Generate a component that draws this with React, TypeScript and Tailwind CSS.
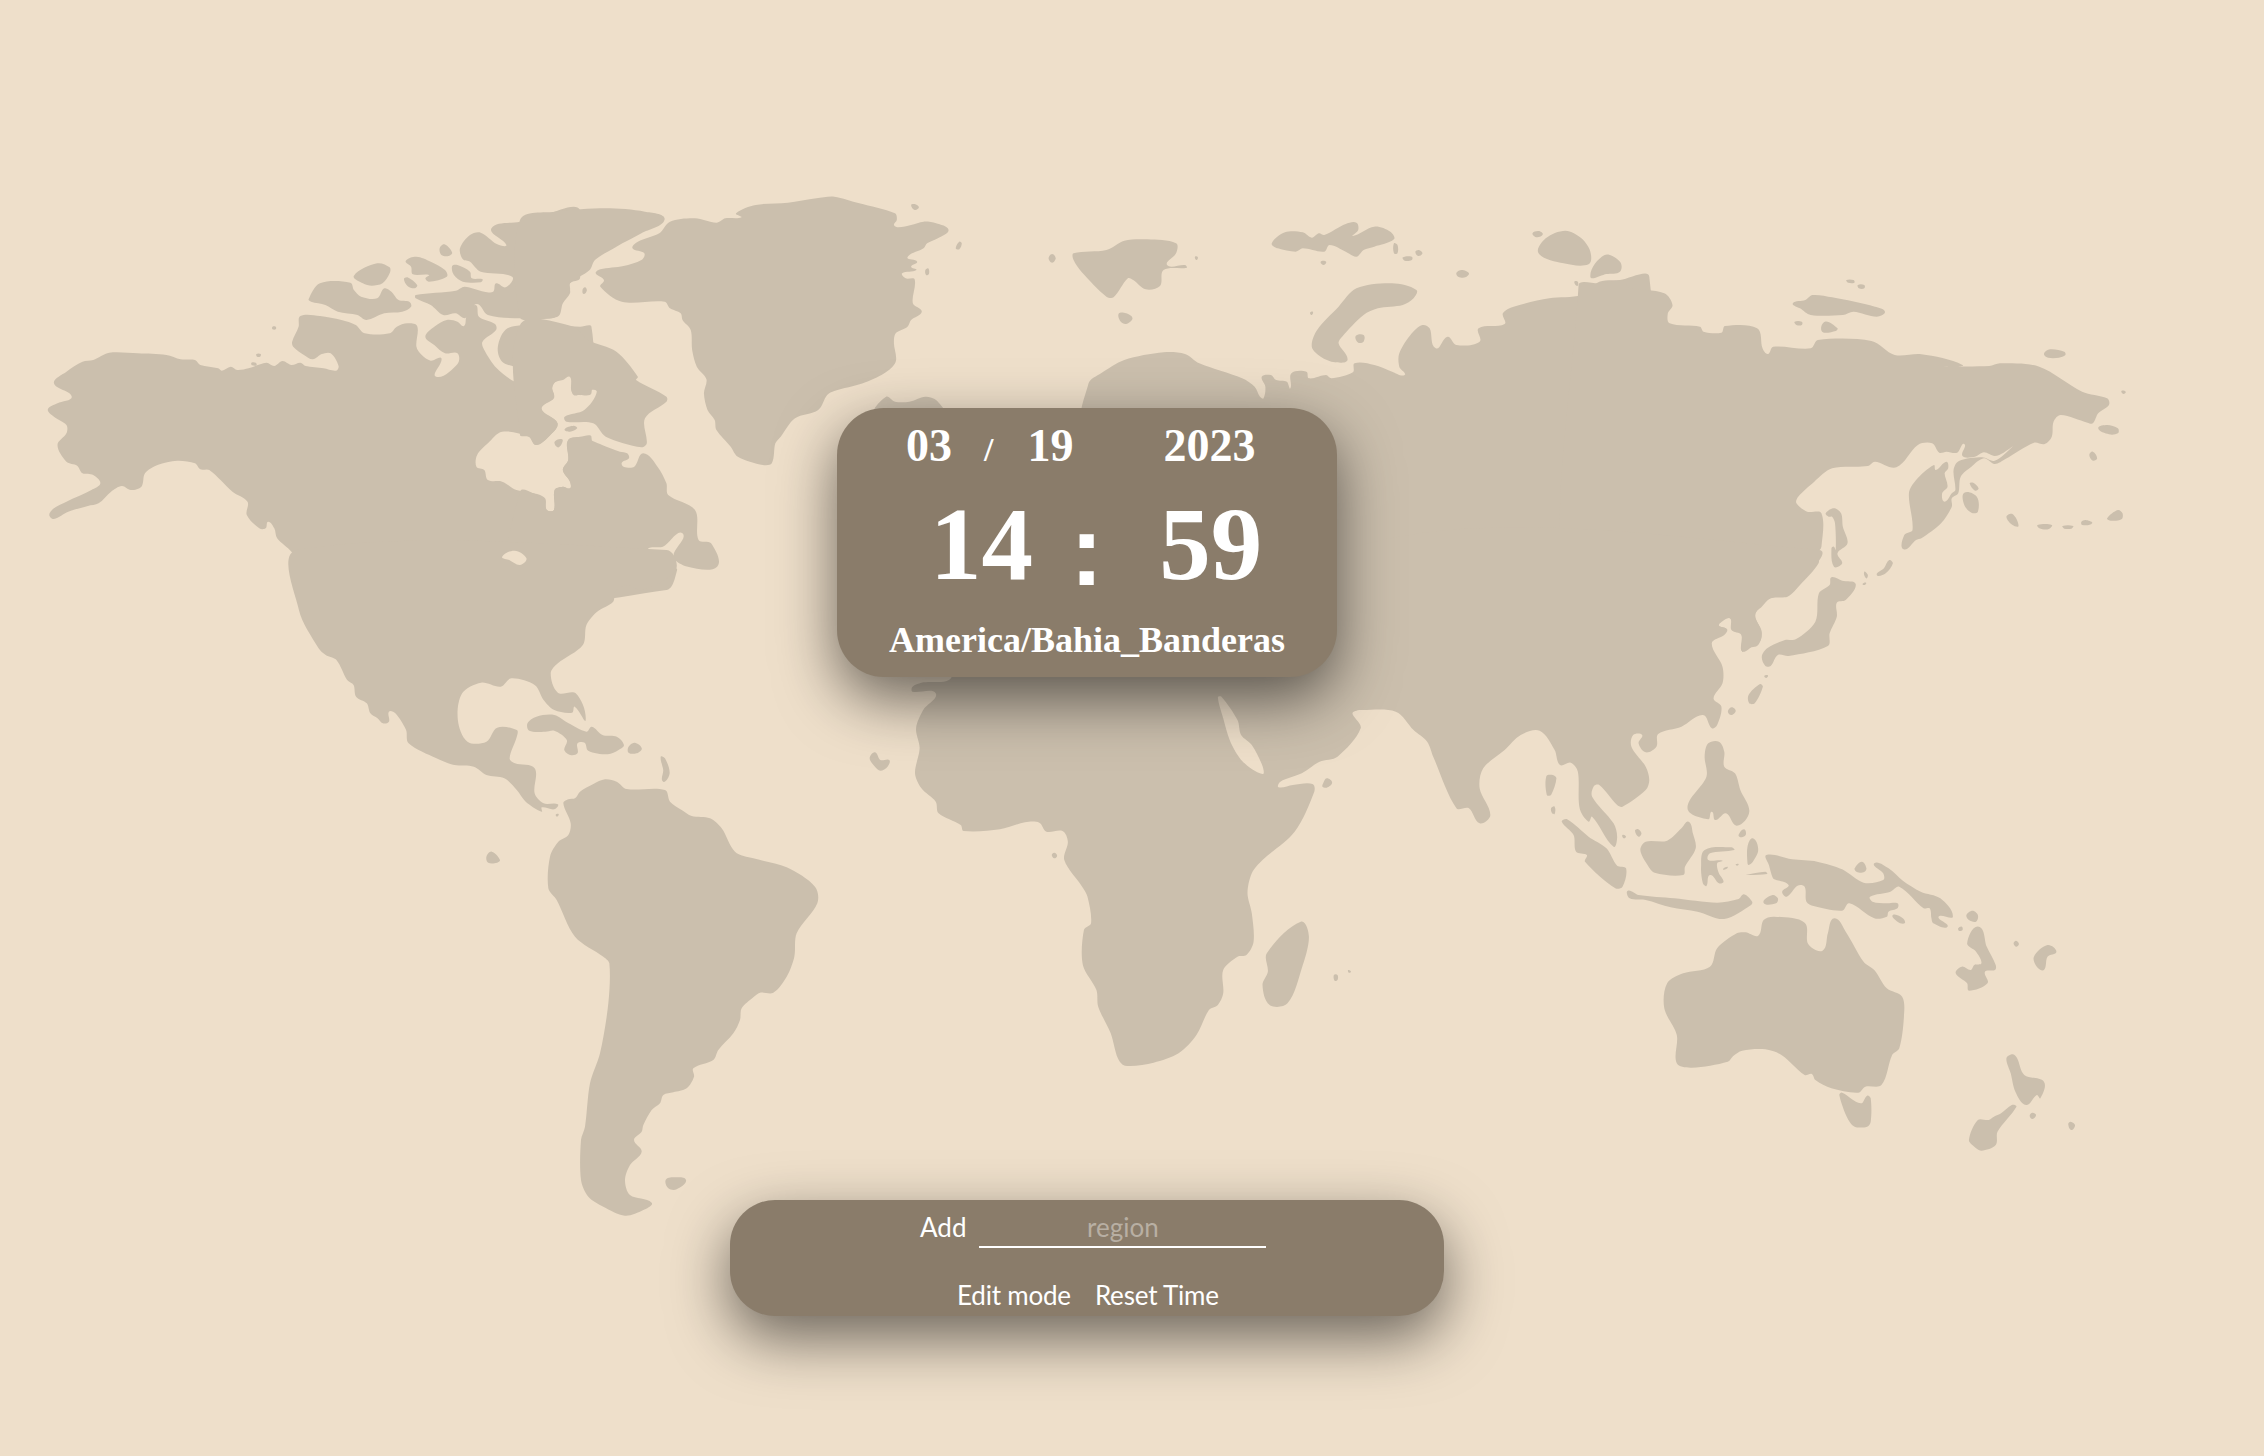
const REGIONS = [
  {
    // Alaska, Canada
    x: 20, y: 180, sx: 1 / 2.8, sy: 1 / 3,
    d: "M95,610 130,575 175,545 205,540 250,518 330,520 410,525 450,538 490,540 505,555 555,565 565,572 590,560 608,570 640,565 690,548 712,558 735,543 760,555 785,548 800,558 850,565 885,572 892,558 870,520 845,522 820,538 795,525 765,500 762,485 780,440 785,408 840,408 900,420 940,435 965,460 1035,460 1055,440 1085,430 1112,438 1110,500 1125,525 1150,542 1180,535 1165,590 1225,552 1225,520 1190,520 1160,495 1135,470 1160,440 1195,420 1225,425 1243,438 1250,410 1275,375 1285,410 1330,432 1333,450 1295,485 1300,510 1335,565 1385,605 1400,600 1402,570 1350,545 1338,500 1365,445 1440,437 1568,440 1600,440 1600,640 1568,645 1545,635 1540,590 1520,600 1495,608 1490,625 1495,650 1460,688 1505,730 1480,770 1445,795 1425,770 1350,755 1310,790 1280,825 1278,860 1300,870 1310,900 1350,905 1390,930 1440,940 1470,955 1475,990 1495,990 1497,930 1520,920 1540,925 1540,905 1520,870 1535,840 1535,780 1568,770 1600,770 1600,1230 780,1230 780,1150 760,1115 720,1075 712,1045 695,1025 688,1045 670,1045 635,1005 637,965 595,935 530,870 505,868 490,850 440,842 385,855 350,880 340,920 310,930 285,918 255,935 220,970 190,978 135,995 95,1017 82,1005 95,985 130,965 200,930 225,910 205,885 175,880 160,857 130,845 105,795 130,760 130,735 95,710 78,688 105,670 145,650 Z M1108,345 1220,332 1245,320 1300,335 1325,335 1333,310 1360,322 1378,290 1290,275 1260,245 1240,238 1232,205 1260,165 1290,158 1335,192 1362,195 1320,145 1400,125 1480,100 1568,90 1568,295 1540,310 1540,340 1520,370 1505,410 1400,415 1310,405 1280,372 1255,400 1245,415 1220,400 1185,405 1150,375 1108,355 Z M1175,205 1188,193 1210,218 1200,228 1180,225 Z M935,287 1000,250 1035,262 1035,280 1015,310 985,317 960,310 Z M1080,243 1110,230 1150,245 1190,270 1195,290 1145,305 1135,295 1145,285 1100,283 1095,260 Z M1210,258 1225,255 1260,275 1265,295 1295,298 1290,307 1240,305 1215,285 Z M1075,297 1085,292 1112,315 1105,325 1085,318 Z M808,358 840,310 925,308 935,330 955,350 1000,355 1020,325 1040,335 1060,360 1090,365 1095,380 1070,395 1020,400 970,420 945,405 890,395 855,375 815,365 Z M1525,748 1550,737 1560,745 1540,755 Z M1497,785 1518,778 1515,795 1505,802 Z M707,440 716,440 716,448 707,448 Z M662,522 674,522 672,530 664,530 Z M648,548 660,548 662,556 650,556 Z",
  },
  {
    // Greenland, Baffin, Quebec, US north east
    x: 520, y: 180, sx: 1 / 2.8, sy: 1 / 3,
    d: "M0,120 100,95 240,85 350,95 405,118 340,160 270,200 210,240 195,270 140,310 140,330 115,375 100,410 60,415 0,412 Z M0,435 150,440 190,480 270,515 330,590 325,600 410,650 410,665 350,715 355,790 340,802 240,770 205,730 130,725 125,710 180,690 215,635 190,630 150,645 140,590 100,605 90,625 95,655 60,685 105,730 80,770 45,795 25,770 0,765 Z M135,780 180,775 230,795 280,815 300,820 305,835 285,848 290,860 320,860 345,820 385,860 410,910 415,945 490,990 500,1080 535,1090 552,1160 470,1160 430,1130 455,1060 400,1100 360,1105 358,1135 430,1160 440,1170 410,1230 0,1230 0,935 65,960 75,990 95,990 97,930 120,920 140,925 140,905 120,870 135,840 Z M605,100 660,75 750,68 830,55 880,50 950,70 1050,100 1055,120 1047,135 1060,142 1095,135 1130,125 1165,130 1200,150 1170,175 1140,190 1130,205 1085,232 1112,245 1095,260 1110,270 1070,280 1080,295 1105,298 1100,370 1125,395 1095,420 1085,440 1052,460 1047,490 1052,545 1020,580 960,610 880,633 860,645 835,690 770,715 730,770 715,790 705,850 680,855 610,830 590,800 550,750 545,720 525,690 515,640 522,598 495,560 482,510 478,450 455,420 450,400 420,385 405,365 285,365 225,320 235,300 212,280 225,268 290,258 340,240 348,220 315,205 330,185 390,160 420,125 490,115 550,128 575,115 620,112 Z M1095,75 1105,72 1117,82 1105,90 Z M1220,205 1230,185 1237,190 1230,208 Z M1135,270 1143,265 1145,282 1137,285 Z M175,330 182,322 187,332 178,342 Z M1480,235 1490,222 1500,235 1490,248 Z M995,700 1025,650 1050,665 1090,665 1135,650 1165,660 1185,700 Z",
  },
  {
    // Mexico, Caribbean
    x: 240, y: 560, sx: 1 / 2.8, sy: 1 / 3,
    d: "M160,-30 165,150 220,265 240,285 270,300 300,360 318,375 325,410 355,430 365,460 385,475 400,490 417,485 417,455 435,460 465,510 472,550 550,595 600,615 655,620 690,645 740,655 775,690 800,725 845,755 845,742 880,748 890,733 850,730 825,700 825,625 770,610 755,595 775,530 775,510 720,503 690,545 637,545 610,480 622,400 675,368 730,380 760,355 825,375 850,420 880,450 930,458 937,440 968,480 940,400 890,398 870,340 890,310 960,255 970,195 1000,155 1045,125 1050,95 1085,75 1125,90 1220,30 1195,-30 Z M805,490 830,470 880,465 920,490 970,515 985,500 1015,525 1055,530 1075,555 1060,570 1030,583 975,572 965,548 945,550 945,580 925,585 908,570 915,540 880,512 855,515 810,512 Z M1088,560 1105,548 1125,565 1110,580 1088,578 Z M1178,590 1190,595 1203,640 1185,665 1185,630 Z M690,890 705,875 728,900 720,908 695,908 Z M884,764 892,762 888,770 Z",
  },
  {
    // South America
    x: 500, y: 760, sx: 1 / 3, sy: 1 / 3,
    d: "M190,130 205,118 225,115 240,95 280,72 315,58 350,65 380,87 495,90 510,125 545,150 575,168 630,175 665,205 705,275 760,295 860,322 945,380 952,430 890,520 883,590 860,650 820,698 780,698 760,712 725,745 720,780 700,820 655,870 640,900 580,925 582,950 560,985 520,997 490,1005 480,1030 455,1050 430,1095 425,1115 402,1140 425,1175 390,1215 375,1260 390,1305 455,1328 430,1350 375,1367 310,1340 265,1310 243,1260 243,1140 255,1100 270,970 300,880 325,730 328,610 310,590 225,530 170,420 145,385 150,290 175,245 205,225 212,190 Z M497,1260 520,1252 558,1260 530,1288 505,1285 Z",
  },
  {
    // Africa, Arabia
    x: 850, y: 660, sx: 1 / 2.8, sy: 1 / 3,
    d: "M240,100 205,150 185,205 195,265 182,340 200,385 240,425 248,460 310,495 318,513 420,508 490,487 530,488 550,515 595,513 610,545 600,600 650,680 665,710 675,790 655,810 652,915 690,990 695,1040 730,1120 750,1195 770,1217 850,1208 920,1180 970,1125 1005,1050 1030,1035 1045,1000 1045,930 1085,890 1110,885 1130,845 1125,760 1113,700 1125,640 1155,600 1245,515 1300,395 1295,372 1240,375 1200,382 1205,365 1265,340 1315,305 1365,290 1430,205 1410,155 1530,152 1600,195 1600,-200 285,-200 285,50 200,68 175,80 175,95 Z M55,295 70,277 85,300 110,300 105,320 85,332 70,320 Z M565,585 572,578 580,587 572,595 Z M1325,370 1335,355 1350,368 1335,383 1323,380 Z M1167,880 1262,785 1285,830 1265,925 1225,1030 1175,1035 1155,975 1170,935 Z M1355,945 1365,945 1365,960 1357,962 Z M1395,930 1403,935 1397,938 Z",
  },
  {
    // Europe, Russia, Arctic islands
    x: 1060, y: 200, sx: 1 / 2.8, sy: 1 / 3,
    d: "M70,700 80,550 115,520 180,480 290,457 350,462 390,490 510,535 545,560 560,590 570,595 575,560 565,530 590,525 605,540 635,545 645,565 648,520 690,515 697,535 745,525 760,535 820,517 825,490 880,495 930,515 965,525 950,500 950,460 985,400 1015,375 1035,385 1052,445 1085,410 1110,435 1175,425 1172,385 1245,372 1240,340 1270,320 1370,295 1460,285 1510,245 1568,240 1650,230 1650,1230 700,1230 Z M38,160 130,150 180,122 245,118 325,130 325,160 300,195 350,195 355,203 290,210 280,258 240,268 205,240 190,235 150,292 130,290 60,215 38,180 Z M165,340 185,340 203,355 185,372 168,362 Z M593,130 630,97 680,97 705,113 725,100 740,105 800,72 830,68 835,90 820,108 880,80 925,95 935,118 880,140 850,150 830,170 800,155 755,135 740,155 680,145 660,155 610,145 Z M935,130 945,135 945,160 935,160 Z M960,172 985,170 985,180 965,182 Z M995,155 1005,150 1015,160 1003,168 Z M730,185 745,185 738,195 Z M1110,218 1125,210 1145,220 1135,232 1115,230 Z M1340,160 1360,115 1415,92 1460,115 1485,155 1480,193 1410,190 Z M1323,100 1340,93 1352,103 1335,112 Z M1485,230 1525,165 1568,185 1568,215 1530,222 Z M1440,245 1450,245 1448,258 Z M705,440 720,390 780,320 830,265 930,250 998,270 990,295 960,315 890,325 850,345 790,410 780,430 805,480 770,487 730,470 Z M828,408 850,405 850,425 835,428 Z M700,338 708,335 705,345 Z M378,170 386,172 382,180 Z",
  },
  {
    // Far east of Russia
    x: 1600, y: 260, sx: 1 / 2.8, sy: 1 / 3,
    d: "M-60,75 0,70 65,62 80,82 180,100 203,135 190,160 195,190 280,200 290,215 340,218 350,198 440,205 455,265 470,282 485,260 590,265 610,240 760,243 825,285 900,283 1015,315 960,318 1090,318 1120,310 1230,320 1350,395 1420,415 1425,435 1395,460 1380,490 1365,488 1290,465 1270,485 1265,530 1245,552 1215,548 1135,597 1105,612 1075,595 1040,620 1010,650 1003,700 985,715 985,740 955,790 900,835 885,840 850,868 852,825 875,810 865,700 885,660 935,615 940,630 970,605 975,625 965,640 973,680 958,700 965,725 985,700 995,690 990,630 1005,603 1070,592 1105,602 1155,560 1130,578 1105,588 1075,577 1050,590 1015,588 1020,552 1000,578 970,575 950,578 930,550 890,555 830,622 770,605 750,618 650,625 600,665 555,710 550,730 580,755 620,760 620,860 610,880 612,910 560,975 525,1010 490,1010 460,1025 435,1065 450,1110 450,1140 425,1160 405,1175 395,1170 395,1120 370,1110 365,1075 335,1090 330,1097 352,1105 350,1120 310,1150 330,1230 -60,1230 Z M540,130 575,120 595,105 650,112 770,140 798,155 775,170 710,155 680,165 590,165 560,145 Z M690,60 710,60 712,68 695,68 Z M722,75 740,75 740,85 725,85 Z M545,185 565,185 565,195 550,195 Z M630,185 665,205 660,213 622,215 Z M1243,282 1260,268 1300,275 1303,285 1285,293 1255,293 Z M1395,505 1420,495 1450,505 1450,520 1425,523 Z M1370,585 1380,575 1392,595 1380,602 Z M1460,393 1472,395 1466,402 Z M1035,670 1045,668 1060,685 1050,692 Z M1020,698 1055,710 1058,755 1040,758 1020,735 Z M1138,770 1155,762 1172,798 1155,795 Z M1225,795 1265,795 1255,808 1230,805 Z M1295,798 1325,798 1320,806 1300,806 Z M1348,785 1360,780 1378,790 1350,795 Z M1420,775 1450,750 1463,760 1460,778 1430,782 Z M632,760 655,745 675,760 680,800 693,850 665,880 678,910 655,920 648,865 655,860 660,870 658,790 650,770 640,770 Z M740,935 750,945 745,955 Z M775,945 795,925 810,900 820,910 800,940 Z M735,972 745,968 742,975 Z",
  },
  {
    // South and east Asia
    x: 1360, y: 560, sx: 1 / 2.8, sy: 1 / 3,
    d: "M1285,-30 1225,80 1190,110 1150,115 1125,140 1105,165 1125,215 1115,255 1085,265 1070,275 1068,225 1040,210 1035,175 1005,195 1028,208 1020,225 985,250 1015,320 1015,370 990,415 1012,440 1000,495 985,505 960,465 900,500 835,522 830,560 800,577 780,550 790,525 765,525 760,560 800,620 810,660 800,690 735,740 720,735 670,675 655,678 650,710 710,790 720,830 710,860 650,770 640,785 615,745 610,635 590,608 560,615 545,570 503,512 450,525 405,570 345,625 335,685 365,765 335,790 305,745 270,745 205,590 188,545 150,510 100,455 0,450 -40,450 -40,-30 Z M1125,290 1140,265 1190,240 1220,238 1275,185 1285,100 1315,75 1320,52 1350,62 1388,72 1360,120 1335,128 1335,170 1315,220 1310,258 1200,288 1170,285 1150,318 1135,318 Z M1030,455 1040,442 1052,452 1040,465 Z M1088,405 1120,372 1128,380 1105,430 1090,430 Z M1132,348 1142,346 1138,354 Z M965,590 975,550 1005,545 1020,575 1020,620 1050,640 1065,690 1090,755 1055,797 1025,760 995,780 985,755 975,778 917,745 970,650 Z M1060,825 1075,808 1080,825 1065,832 Z M565,785 580,778 640,830 690,865 720,917 745,925 735,980 715,985 630,905 635,885 605,875 598,825 Z M522,648 540,645 550,655 535,705 523,705 Z M535,745 545,740 545,762 538,760 Z M735,825 745,830 738,835 Z M770,812 778,807 788,820 780,830 Z",
  },
  {
    // Indonesia, Australia, Pacific
    x: 1560, y: 820, sx: 1 / 2.8, sy: 1 / 3,
    d: "M225,90 240,65 300,62 340,25 360,5 372,40 380,85 350,140 345,165 265,158 245,135 Z M405,90 480,82 488,90 420,100 415,120 455,122 440,130 445,160 458,185 445,190 420,165 410,198 400,190 395,140 Z M525,130 525,80 540,55 555,90 540,125 528,135 Z M458,145 470,142 458,150 Z M492,133 500,132 496,137 Z M520,165 575,155 580,162 530,165 Z M190,212 220,225 320,235 440,248 500,237 515,223 538,245 535,255 460,297 385,275 310,262 240,240 195,235 Z M570,248 595,225 610,235 605,250 Z M578,105 650,118 720,125 790,148 850,188 905,180 905,160 880,130 920,145 960,182 1010,215 1065,235 1100,290 1060,290 1085,320 1045,310 1040,295 1035,265 1018,265 950,200 925,215 868,230 875,245 915,250 945,250 945,265 920,275 915,290 880,295 810,250 790,272 710,258 690,245 685,200 665,197 635,230 622,215 640,195 600,178 595,172 585,135 Z M825,145 845,125 858,145 850,157 830,155 Z M932,285 960,295 965,310 945,305 Z M1138,285 1155,272 1170,285 1165,305 1145,300 Z M1115,325 1125,320 1127,330 1118,333 Z M1140,370 1172,320 1195,380 1220,435 1218,450 1190,455 1197,490 1145,512 1140,490 1108,460 1125,440 1150,450 1160,435 1180,430 1165,395 Z M1270,370 1277,362 1285,372 1277,380 Z M1327,410 1365,375 1390,395 1365,410 1355,450 1335,440 Z M300,490 345,460 420,440 440,385 495,340 520,337 555,347 570,300 600,290 685,308 695,372 735,392 750,340 768,295 800,335 850,425 880,450 915,505 958,530 963,590 950,685 930,705 900,795 855,800 835,818 760,805 715,780 705,762 685,765 620,705 575,688 510,692 485,708 470,725 370,743 327,730 327,645 292,565 Z M782,825 790,818 842,850 860,827 870,835 870,905 860,920 825,920 805,895 Z M1250,715 1268,703 1280,715 1300,765 1355,785 1345,835 1335,825 1305,855 1275,815 1262,760 Z M1145,960 1170,900 1200,900 1215,890 1235,880 1265,855 1278,860 1225,935 1220,975 1180,992 1160,980 Z M1323,878 1333,885 1323,897 1315,887 Z M1430,905 1442,915 1432,930 1423,912 Z",
  },
];

// inland water, painted over the land
const WATER = [
  {
    x: 20, y: 180, sx: 1 / 2.8, sy: 1 / 3,
    d: "M1350,1130 1385,1112 1418,1135 1400,1155 1370,1140 Z",
  },
  {
    x: 850, y: 660, sx: 1 / 2.8, sy: 1 / 3,
    d: "M1030,112 1040,110 1085,180 1095,225 1125,255 1155,318 1155,342 1100,305 1065,245 1045,175 Z",
  },
];

// rounds the traced polygons into soft coastlines
function smooth(d: string) {
  return d
    .split("Z")
    .map((s) => s.replace("M", "").trim())
    .filter(Boolean)
    .map((s) => {
      const pts = s.split(" ").map((p) => p.split(",").map(Number));
      const n = pts.length;
      const tangent = (i: number) => {
        const a = pts[(i - 1 + n) % n];
        const b = pts[(i + 1) % n];
        const dx = b[0] - a[0];
        const dy = b[1] - a[1];
        const len = Math.hypot(dx, dy) || 1;
        return [dx / len, dy / len];
      };
      let out = `M${pts[0][0]},${pts[0][1]}`;
      for (let i = 0; i < n; i++) {
        const p = pts[i];
        const q = pts[(i + 1) % n];
        const seg = Math.hypot(q[0] - p[0], q[1] - p[1]) * 0.3;
        const t0 = tangent(i);
        const t1 = tangent((i + 1) % n);
        out += ` C${(p[0] + t0[0] * seg).toFixed(1)},${(p[1] + t0[1] * seg).toFixed(1)} ${(q[0] - t1[0] * seg).toFixed(1)},${(q[1] - t1[1] * seg).toFixed(1)} ${q[0]},${q[1]}`;
      }
      return out + " Z";
    })
    .join(" ");
}

function WorldMap() {
  return (
    <svg className="absolute left-0 top-0 h-[1456px] w-[2264px]" viewBox="0 0 2264 1456">
      {REGIONS.map((r, i) => (
        <g key={i} transform={`translate(${r.x} ${r.y}) scale(${r.sx} ${r.sy})`}>
          <path d={smooth(r.d)} fill="#cbbfad" />
        </g>
      ))}
      {WATER.map((r, i) => (
        <g key={i} transform={`translate(${r.x} ${r.y}) scale(${r.sx} ${r.sy})`}>
          <path d={smooth(r.d)} fill="#eedfca" />
        </g>
      ))}
    </svg>
  );
}

export default function App() {
  return (
    <div className="relative h-[1456px] w-full overflow-hidden bg-[#eedfca]">
      <WorldMap />
      <div className="relative flex flex-col items-center pr-[90px] pt-[408px]">
        <section className="flex h-[269px] w-[500px] flex-col items-center rounded-[47px] bg-[#8a7c6a] font-['Liberation_Serif',serif] font-bold text-white shadow-[0_22px_60px_rgba(0,0,0,0.55)]">
          <div className="flex w-full items-baseline pl-[69px] pt-[15px] text-[46px] leading-none">
            <span>03</span>
            <span className="ml-[32px] text-[34px]">/</span>
            <span className="ml-[34px]">19</span>
            <span className="ml-[90px]">2023</span>
          </div>
          <div className="mt-[24px] flex w-full items-baseline pl-[93px] text-[103px] leading-none">
            <span>14</span>
            <span className="ml-[37px] translate-y-[6px] font-['Liberation_Sans',sans-serif] text-[100px]">:</span>
            <span className="ml-[56px]">59</span>
          </div>
          <div className="mt-[26px] text-[36px] leading-none">America/Bahia_Banderas</div>
        </section>
        <section className="mt-[523px] flex h-[116px] w-[714px] flex-col rounded-[45px] bg-[#8a7c6a] font-['Lato',sans-serif] text-[26px] text-white shadow-[0_22px_60px_rgba(0,0,0,0.55)]">
          <div className="flex items-end pl-[190px] pt-[14px]">
            <label htmlFor="region" className="pb-[8px] leading-none">Add</label>
            <input
              id="region"
              placeholder="region"
              className="ml-[13px] h-[34px] w-[287px] border-b-2 border-white bg-transparent pb-[7px] text-center leading-none outline-none placeholder:text-[#b8afa3]"
            />
          </div>
          <div className="mt-[34px] flex gap-[24px] pl-[227px] leading-none tracking-[-0.2px]">
            <button>Edit mode</button>
            <button>Reset Time</button>
          </div>
        </section>
      </div>
    </div>
  );
}
